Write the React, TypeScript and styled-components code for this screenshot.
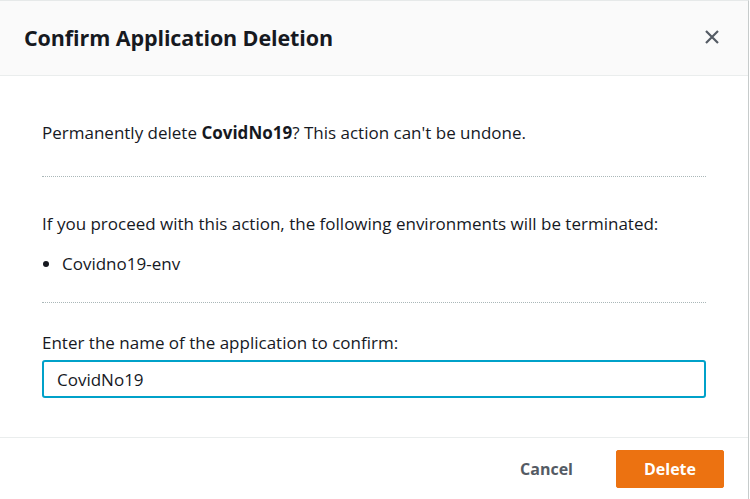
import React from "react";
import styled, { createGlobalStyle } from "styled-components";

const Global = createGlobalStyle`
  html, body { margin: 0; padding: 0; background: #ffffff; }
  body { font-family: "Open Sans", "Noto Sans", sans-serif; color: #16191f; }
  * { box-sizing: border-box; }
`;

const Dialog = styled.div`
  width: 749px;
  height: 499px;
  display: flex;
  flex-direction: column;
  background: #ffffff;
  border-top: 1px solid #e6e9e9;
  border-right: 1px solid #c6cbcb;
`;

const Header = styled.div`
  height: 75px;
  display: flex;
  align-items: center;
  justify-content: space-between;
  padding: 0 24px 2px 24px;
  background: #fafafa;
  border-bottom: 1px solid #eaeded;
`;

const Title = styled.h2`
  margin: 0;
  font-size: 21.5px;
  font-weight: 700;
  color: #16191f;
  letter-spacing: -0.1px;
`;

const CloseButton = styled.button`
  width: 24px;
  height: 24px;
  padding: 0;
  border: none;
  background: transparent;
  display: flex;
  align-items: center;
  justify-content: center;
  color: #545b64;
  cursor: pointer;
`;

const Body = styled.div`
  flex: 1;
  padding: 45px 42px 0 42px;
  display: flex;
  flex-direction: column;
`;

const Section = styled.div<{ $pad: string; $dotted?: boolean }>`
  padding: ${(p) => p.$pad};
  border-bottom: ${(p) => (p.$dotted ? "1px dotted #aab7b8" : "none")};
`;

const Text = styled.p`
  margin: 0;
  font-size: 17px;
  line-height: 24px;
  color: #16191f;
`;

const List = styled.ul`
  margin: 16px 0 0 0;
  padding: 0 0 0 20px;
  font-size: 17px;
  line-height: 24px;
`;

const Label = styled.label`
  display: block;
  font-size: 17px;
  line-height: 24px;
  margin-bottom: 5px;
`;

const Input = styled.input`
  width: 100%;
  height: 38px;
  padding: 0 13px;
  font-family: "Open Sans", "Noto Sans", sans-serif;
  font-size: 17px;
  color: #16191f;
  border: 2px solid #00a1c9;
  border-radius: 3px;
  outline: none;
  caret-color: #16191f;
`;

const Footer = styled.div`
  height: 62px;
  border-top: 1px solid #eaeded;
  display: flex;
  align-items: center;
  justify-content: flex-end;
  gap: 23px;
  padding: 0 24px 0 0;
`;

const GhostButton = styled.button`
  background: transparent;
  border: none;
  font-family: "Open Sans", "Noto Sans", sans-serif;
  font-size: 16px;
  font-weight: 700;
  color: #545b64;
  padding: 0 20px;
  height: 38px;
`;

const PrimaryButton = styled.button`
  background: #ec7211;
  border: 1px solid #ec7211;
  border-radius: 2px;
  font-family: "Open Sans", "Noto Sans", sans-serif;
  font-size: 16px;
  font-weight: 700;
  color: #ffffff;
  width: 108px;
  height: 38px;
`;

export default function App() {
  return (
    <>
      <Global />
      <Dialog>
        <Header>
          <Title>Confirm Application Deletion</Title>
          <CloseButton aria-label="Close">
            <svg width="16" height="16" viewBox="0 0 16 16">
              <path d="M2 2 L14 14 M14 2 L2 14" stroke="currentColor" strokeWidth="2.2" />
            </svg>
          </CloseButton>
        </Header>
        <Body>
          <Section $pad="0 0 31px 0" $dotted>
            <Text>
              Permanently delete <b>CovidNo19</b>? This action can't be undone.
            </Text>
          </Section>
          <Section $pad="35px 0 26px 0" $dotted>
            <Text>If you proceed with this action, the following environments will be terminated:</Text>
            <List>
              <li>Covidno19-env</li>
            </List>
          </Section>
          <Section $pad="28px 0 0 0">
            <Label>Enter the name of the application to confirm:</Label>
            <Input defaultValue="CovidNo19" autoFocus />
          </Section>
        </Body>
        <Footer>
          <GhostButton>Cancel</GhostButton>
          <PrimaryButton>Delete</PrimaryButton>
        </Footer>
      </Dialog>
    </>
  );
}
